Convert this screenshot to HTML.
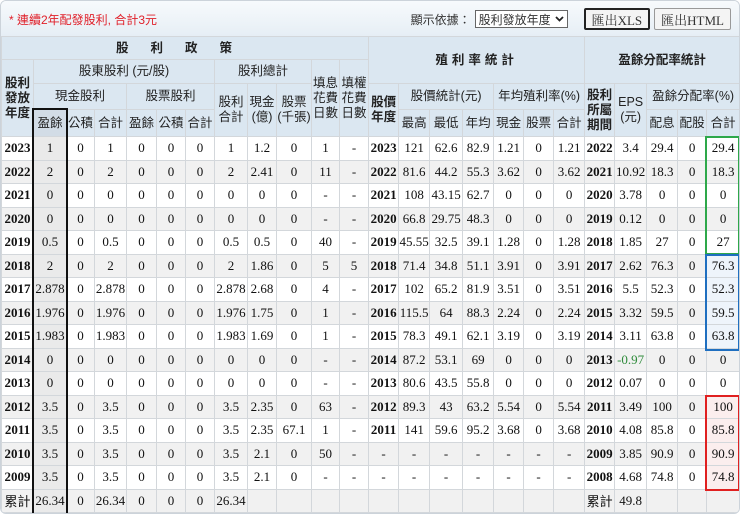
<!DOCTYPE html>
<html><head><meta charset="utf-8"><style>
*{margin:0;padding:0;box-sizing:border-box}
body{width:740px;height:514px;background:#fff;font-family:"Liberation Serif","Noto Serif CJK SC",serif;overflow:hidden}
.wrap{position:absolute;left:0;top:0;width:740px;height:514px;border:1px solid #ccd3da;border-radius:6px;overflow:hidden;background:#fff}
.top{height:35px;background:linear-gradient(#f7fafc,#e6eef5);position:relative}
.note{position:absolute;left:8px;top:10px;color:#e0202a;font:12px "Liberation Sans","Noto Sans CJK TC",sans-serif}
.ctl{position:absolute;right:8px;top:7px;font:12px "Liberation Sans","Noto Sans CJK TC",sans-serif;color:#333;display:flex;align-items:center;gap:4px}
.sel{border:1px solid #666;background:#fff;height:18px;padding:0 3px;display:flex;align-items:center;gap:4px;margin-right:12px}
.btn{border:1px solid #999;background:#f4f4f4;height:22px;padding:0 6px;display:flex;align-items:center;font-family:"Liberation Serif","Noto Serif CJK TC",serif;font-size:13px;border-radius:2px}
.btn.a{border:2px solid #222}
table{border-collapse:collapse;table-layout:fixed;width:738px;position:absolute;left:0;top:35px}
td,th{border:1px solid #d3d7db;text-align:center;font-size:13px;color:#111;padding:0;overflow:hidden;white-space:nowrap}
th{background:#dbe7f1;font:12.5px "Liberation Sans","Noto Sans CJK TC",sans-serif;color:#222;font-weight:normal;line-height:15px;white-space:normal}
th.e{background:#d2dce6}
tbody tr{height:23.5px}
tbody tr:nth-child(even) td{background:#f1f1f1}
tbody td.e{background:#eaeaea!important}
td.y{font-weight:bold}
td.g{color:#2e8b3a}
td.r{background:#fbeeee!important}
td.bl{background:#eef4fb!important}
td.k{font-family:"Liberation Sans","Noto Sans CJK TC",sans-serif}
.box{position:absolute;border:2px solid}
</style></head><body><div class="wrap">
<div class="top"><div class="note">* 連續2年配發股利, 合計3元</div>
<div class="ctl">顯示依據：<div class="sel">股利發放年度 <svg width="9" height="6" viewBox="0 0 9 6"><path d="M1 1L4.5 4.5L8 1" fill="none" stroke="#222" stroke-width="1.8"/></svg></div><div class="btn a">匯出XLS</div><div class="btn">匯出HTML</div></div></div>
<table>
<colgroup><col style="width:32px"><col style="width:33px"><col style="width:28px"><col style="width:32px"><col style="width:30px"><col style="width:29px"><col style="width:29px"><col style="width:33px"><col style="width:29px"><col style="width:35px"><col style="width:28px"><col style="width:29px"><col style="width:30px"><col style="width:31px"><col style="width:33px"><col style="width:31px"><col style="width:30px"><col style="width:30px"><col style="width:31px"><col style="width:30px"><col style="width:32px"><col style="width:31px"><col style="width:29px"><col style="width:33px"></colgroup>
<thead>
<tr style="height:23px"><th colspan="12" style="letter-spacing:22px;font-weight:bold">股利政策</th><th colspan="7" rowspan="2" style="letter-spacing:4px;font-weight:bold">殖利率統計</th><th colspan="5" rowspan="2" style="font-weight:bold">盈餘分配率統計</th></tr>
<tr style="height:24px"><th rowspan="3" style="font-weight:bold">股利<br>發放<br>年度</th><th colspan="6">股東股利 (元/股)</th><th colspan="3">股利總計</th><th rowspan="3">填息<br>花費<br>日數</th><th rowspan="3">填權<br>花費<br>日數</th></tr>
<tr style="height:26px"><th colspan="3">現金股利</th><th colspan="3">股票股利</th><th rowspan="2">股利<br>合計</th><th rowspan="2">現金<br>(億)</th><th rowspan="2">股票<br>(千張)</th><th rowspan="2" style="font-weight:bold">股價<br>年度</th><th colspan="3">股價統計(元)</th><th colspan="3">年均殖利率(%)</th><th rowspan="2" style="font-weight:bold">股利<br>所屬<br>期間</th><th rowspan="2">EPS<br>(元)</th><th colspan="3">盈餘分配率(%)</th></tr>
<tr style="height:27px"><th class="e">盈餘</th><th>公積</th><th>合計</th><th>盈餘</th><th>公積</th><th>合計</th><th>最高</th><th>最低</th><th>年均</th><th>現金</th><th>股票</th><th>合計</th><th>配息</th><th>配股</th><th>合計</th></tr>
</thead>
<tbody>
<tr><td class="y">2023</td><td class="e">1</td><td>0</td><td>1</td><td>0</td><td>0</td><td>0</td><td>1</td><td>1.2</td><td>0</td><td>1</td><td>-</td><td class="y">2023</td><td>121</td><td>62.6</td><td>82.9</td><td>1.21</td><td>0</td><td>1.21</td><td class="y">2022</td><td>3.4</td><td>29.4</td><td>0</td><td>29.4</td></tr>
<tr><td class="y">2022</td><td class="e">2</td><td>0</td><td>2</td><td>0</td><td>0</td><td>0</td><td>2</td><td>2.41</td><td>0</td><td>11</td><td>-</td><td class="y">2022</td><td>81.6</td><td>44.2</td><td>55.3</td><td>3.62</td><td>0</td><td>3.62</td><td class="y">2021</td><td>10.92</td><td>18.3</td><td>0</td><td>18.3</td></tr>
<tr><td class="y">2021</td><td class="e">0</td><td>0</td><td>0</td><td>0</td><td>0</td><td>0</td><td>0</td><td>0</td><td>0</td><td>-</td><td>-</td><td class="y">2021</td><td>108</td><td>43.15</td><td>62.7</td><td>0</td><td>0</td><td>0</td><td class="y">2020</td><td>3.78</td><td>0</td><td>0</td><td>0</td></tr>
<tr><td class="y">2020</td><td class="e">0</td><td>0</td><td>0</td><td>0</td><td>0</td><td>0</td><td>0</td><td>0</td><td>0</td><td>-</td><td>-</td><td class="y">2020</td><td>66.8</td><td>29.75</td><td>48.3</td><td>0</td><td>0</td><td>0</td><td class="y">2019</td><td>0.12</td><td>0</td><td>0</td><td>0</td></tr>
<tr><td class="y">2019</td><td class="e">0.5</td><td>0</td><td>0.5</td><td>0</td><td>0</td><td>0</td><td>0.5</td><td>0.5</td><td>0</td><td>40</td><td>-</td><td class="y">2019</td><td>45.55</td><td>32.5</td><td>39.1</td><td>1.28</td><td>0</td><td>1.28</td><td class="y">2018</td><td>1.85</td><td>27</td><td>0</td><td>27</td></tr>
<tr><td class="y">2018</td><td class="e">2</td><td>0</td><td>2</td><td>0</td><td>0</td><td>0</td><td>2</td><td>1.86</td><td>0</td><td>5</td><td>5</td><td class="y">2018</td><td>71.4</td><td>34.8</td><td>51.1</td><td>3.91</td><td>0</td><td>3.91</td><td class="y">2017</td><td>2.62</td><td>76.3</td><td>0</td><td class="bl">76.3</td></tr>
<tr><td class="y">2017</td><td class="e">2.878</td><td>0</td><td>2.878</td><td>0</td><td>0</td><td>0</td><td>2.878</td><td>2.68</td><td>0</td><td>4</td><td>-</td><td class="y">2017</td><td>102</td><td>65.2</td><td>81.9</td><td>3.51</td><td>0</td><td>3.51</td><td class="y">2016</td><td>5.5</td><td>52.3</td><td>0</td><td class="bl">52.3</td></tr>
<tr><td class="y">2016</td><td class="e">1.976</td><td>0</td><td>1.976</td><td>0</td><td>0</td><td>0</td><td>1.976</td><td>1.75</td><td>0</td><td>1</td><td>-</td><td class="y">2016</td><td>115.5</td><td>64</td><td>88.3</td><td>2.24</td><td>0</td><td>2.24</td><td class="y">2015</td><td>3.32</td><td>59.5</td><td>0</td><td class="bl">59.5</td></tr>
<tr><td class="y">2015</td><td class="e">1.983</td><td>0</td><td>1.983</td><td>0</td><td>0</td><td>0</td><td>1.983</td><td>1.69</td><td>0</td><td>1</td><td>-</td><td class="y">2015</td><td>78.3</td><td>49.1</td><td>62.1</td><td>3.19</td><td>0</td><td>3.19</td><td class="y">2014</td><td>3.11</td><td>63.8</td><td>0</td><td class="bl">63.8</td></tr>
<tr><td class="y">2014</td><td class="e">0</td><td>0</td><td>0</td><td>0</td><td>0</td><td>0</td><td>0</td><td>0</td><td>0</td><td>-</td><td>-</td><td class="y">2014</td><td>87.2</td><td>53.1</td><td>69</td><td>0</td><td>0</td><td>0</td><td class="y">2013</td><td class="g">-0.97</td><td>0</td><td>0</td><td>0</td></tr>
<tr><td class="y">2013</td><td class="e">0</td><td>0</td><td>0</td><td>0</td><td>0</td><td>0</td><td>0</td><td>0</td><td>0</td><td>-</td><td>-</td><td class="y">2013</td><td>80.6</td><td>43.5</td><td>55.8</td><td>0</td><td>0</td><td>0</td><td class="y">2012</td><td>0.07</td><td>0</td><td>0</td><td>0</td></tr>
<tr><td class="y">2012</td><td class="e">3.5</td><td>0</td><td>3.5</td><td>0</td><td>0</td><td>0</td><td>3.5</td><td>2.35</td><td>0</td><td>63</td><td>-</td><td class="y">2012</td><td>89.3</td><td>43</td><td>63.2</td><td>5.54</td><td>0</td><td>5.54</td><td class="y">2011</td><td>3.49</td><td>100</td><td>0</td><td class="r">100</td></tr>
<tr><td class="y">2011</td><td class="e">3.5</td><td>0</td><td>3.5</td><td>0</td><td>0</td><td>0</td><td>3.5</td><td>2.35</td><td>67.1</td><td>1</td><td>-</td><td class="y">2011</td><td>141</td><td>59.6</td><td>95.2</td><td>3.68</td><td>0</td><td>3.68</td><td class="y">2010</td><td>4.08</td><td>85.8</td><td>0</td><td class="r">85.8</td></tr>
<tr><td class="y">2010</td><td class="e">3.5</td><td>0</td><td>3.5</td><td>0</td><td>0</td><td>0</td><td>3.5</td><td>2.1</td><td>0</td><td>50</td><td>-</td><td>-</td><td>-</td><td>-</td><td>-</td><td>-</td><td>-</td><td>-</td><td class="y">2009</td><td>3.85</td><td>90.9</td><td>0</td><td class="r">90.9</td></tr>
<tr><td class="y">2009</td><td class="e">3.5</td><td>0</td><td>3.5</td><td>0</td><td>0</td><td>0</td><td>3.5</td><td>2.1</td><td>0</td><td>-</td><td>-</td><td>-</td><td>-</td><td>-</td><td>-</td><td>-</td><td>-</td><td>-</td><td class="y">2008</td><td>4.68</td><td>74.8</td><td>0</td><td class="r">74.8</td></tr>
<tr><td class="k">累計</td><td class="e">26.34</td><td>0</td><td>26.34</td><td>0</td><td>0</td><td>0</td><td>26.34</td><td></td><td></td><td></td><td></td><td></td><td></td><td></td><td></td><td></td><td></td><td></td><td class="k">累計</td><td>49.8</td><td></td><td></td><td></td></tr>
</tbody></table>
<div class="box" style="border-color:#111;left:31px;top:107px;width:36px;height:410px"></div>
<div class="box" style="border-color:#2ea84a;left:704px;top:135px;width:35px;height:119px"></div>
<div class="box" style="border-color:#1f6fc0;left:704px;top:253px;width:35px;height:97px"></div>
<div class="box" style="border-color:#e02020;left:704px;top:394px;width:35px;height:96px"></div>
</div></body></html>
